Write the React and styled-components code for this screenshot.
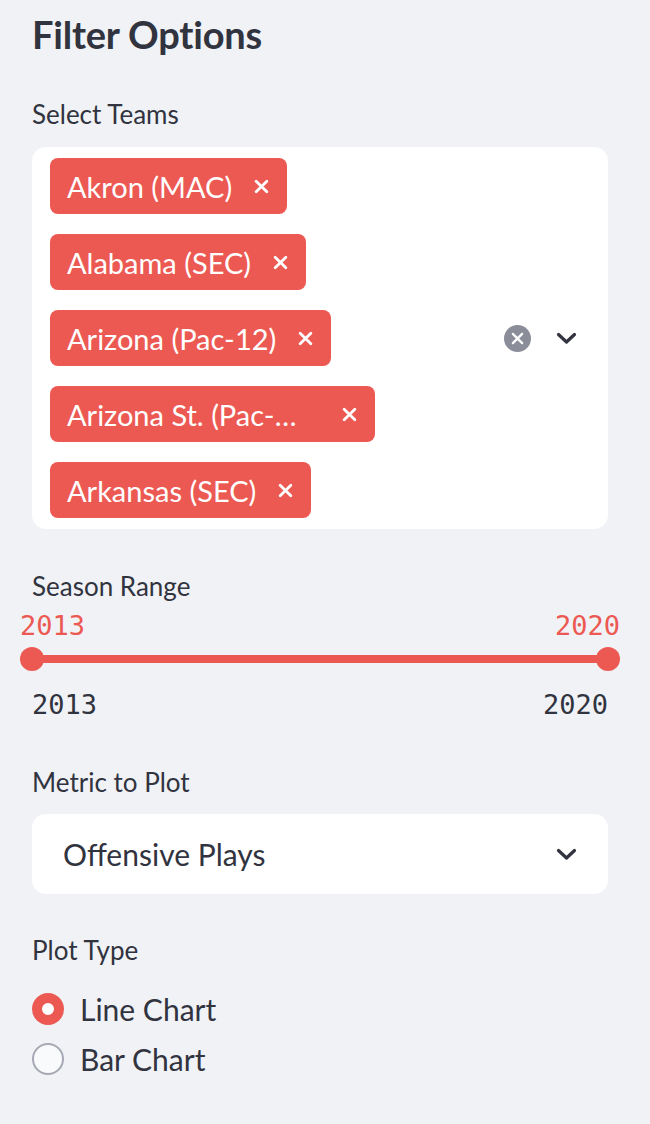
import React from "react";
import styled, { createGlobalStyle } from "styled-components";

const GlobalStyle = createGlobalStyle`
  html, body {
    margin: 0;
    padding: 0;
    background: #f0f2f6;
  }
  body {
    font-family: Lato, "Noto Sans", sans-serif;
    color: #31333f;
  }
`;

const RED = "#ec5953";
const TEXT = "#31333f";

const Sidebar = styled.div`
  width: 650px;
  min-height: 1124px;
  box-sizing: border-box;
  padding: 10px 42px 0 32px;
  background: #f0f2f6;
  display: flex;
  flex-direction: column;
`;

const Heading = styled.h3`
  margin: 0;
  font-size: 38px;
  line-height: 48px;
  font-weight: 700;
  color: ${TEXT};
  letter-spacing: -0.2px;
`;

const Label = styled.div`
  font-size: 26px;
  line-height: 32px;
  color: ${TEXT};
  margin-top: ${(p) => p.$mt}px;
`;

const MultiBox = styled.div`
  margin-top: 17px;
  background: #ffffff;
  border-radius: 14px;
  padding: 11px 0 11px 18px;
  display: flex;
  align-items: center;
`;

const TagList = styled.div`
  flex: 1;
  display: flex;
  flex-direction: column;
  align-items: flex-start;
  gap: 20px;
`;

const Tag = styled.div`
  height: 56px;
  box-sizing: border-box;
  background: ${RED};
  border-radius: 8px;
  padding: 0 18px 0 17px;
  display: flex;
  align-items: center;
  gap: 22px;
  color: #ffffff;
  font-size: 29px;
`;

const TagText = styled.span`
  white-space: nowrap;
  overflow: hidden;
  text-overflow: ellipsis;
  max-width: 253px;
  ${(p) =>
    p.$truncate
      ? "width: 253px; box-sizing: border-box; padding-right: 16px;"
      : ""}
`;

const Indicators = styled.div`
  display: flex;
  align-items: center;
  gap: 25px;
  padding-right: 31px;
`;

const ClearCircle = styled.div`
  width: 27px;
  height: 27px;
  border-radius: 50%;
  background: #8b8d99;
  display: flex;
  align-items: center;
  justify-content: center;
`;

const SliderBlock = styled.div`
  margin-top: 9px;
  display: flex;
  flex-direction: column;
`;

const ValueRow = styled.div`
  display: flex;
  justify-content: space-between;
  margin: 0 -12px;
  font-family: "DejaVu Sans Mono", "Liberation Mono", monospace;
  font-size: 27px;
  line-height: 30px;
  color: ${(p) => p.$color};
`;

const Rail = styled.div`
  position: relative;
  margin-top: 6px;
  height: 24px;
  display: flex;
  align-items: center;
`;

const Track = styled.div`
  flex: 1;
  height: 8px;
  background: ${RED};
`;

const Thumb = styled.div`
  position: absolute;
  top: 0;
  width: 24px;
  height: 24px;
  border-radius: 50%;
  background: ${RED};
  ${(p) => (p.$side === "left" ? "left: -12px;" : "right: -12px;")}
`;

const TickRow = styled(ValueRow)`
  margin: 19px 0 0 0;
`;

const SelectBox = styled.div`
  margin-top: 16px;
  height: 80px;
  box-sizing: border-box;
  background: #ffffff;
  border-radius: 14px;
  padding: 0 31px 0 31px;
  display: flex;
  align-items: center;
  justify-content: space-between;
`;

const SelectValue = styled.span`
  font-size: 30px;
  line-height: 36px;
  color: ${TEXT};
`;

const RadioGroup = styled.div`
  margin-top: 23px;
  display: flex;
  flex-direction: column;
  gap: 10px;
`;

const RadioRow = styled.label`
  height: 40px;
  display: flex;
  align-items: center;
  gap: 16px;
  font-size: 30px;
  line-height: 40px;
  color: ${TEXT};
`;

const RadioCircle = styled.span`
  width: 32px;
  height: 32px;
  box-sizing: border-box;
  border-radius: 50%;
  flex-shrink: 0;
  ${(p) =>
    p.$checked
      ? `border: 10px solid ${RED}; background: #ffffff;`
      : `border: 2px solid #a6a9b3; background: #f9fafc;`}
`;

const XIcon = ({ size = 15, color = "#fff", width = 2.6 }) => (
  <svg width={size} height={size} viewBox="0 0 14 14">
    <path
      d="M2 2 L12 12 M12 2 L2 12"
      stroke={color}
      strokeWidth={width}
      strokeLinecap="round"
    />
  </svg>
);

const Chevron = () => (
  <svg width="21" height="13" viewBox="0 0 21 13">
    <path
      d="M2.5 2.5 L10.5 10 L18.5 2.5"
      fill="none"
      stroke={TEXT}
      strokeWidth="3.2"
      strokeLinecap="round"
      strokeLinejoin="round"
    />
  </svg>
);

const teams = [
  { name: "Akron (MAC)" },
  { name: "Alabama (SEC)" },
  { name: "Arizona (Pac-12)" },
  { name: "Arizona St. (Pac-12)", truncate: true },
  { name: "Arkansas (SEC)" },
];

export default function App() {
  return (
    <>
      <GlobalStyle />
      <Sidebar>
        <Heading>Filter Options</Heading>

        <Label $mt={40}>Select Teams</Label>
        <MultiBox>
          <TagList>
            {teams.map((t) => (
              <Tag key={t.name}>
                <TagText $truncate={t.truncate}>{t.name}</TagText>
                <XIcon />
              </Tag>
            ))}
          </TagList>
          <Indicators>
            <ClearCircle>
              <XIcon size={13} width={2.4} />
            </ClearCircle>
            <Chevron />
          </Indicators>
        </MultiBox>

        <Label $mt={41}>Season Range</Label>
        <SliderBlock>
          <ValueRow $color={RED}>
            <span>2013</span>
            <span>2020</span>
          </ValueRow>
          <Rail>
            <Track />
            <Thumb $side="left" />
            <Thumb $side="right" />
          </Rail>
          <TickRow $color={TEXT}>
            <span>2013</span>
            <span>2020</span>
          </TickRow>
        </SliderBlock>

        <Label $mt={46}>Metric to Plot</Label>
        <SelectBox>
          <SelectValue>Offensive Plays</SelectValue>
          <Chevron />
        </SelectBox>

        <Label $mt={40}>Plot Type</Label>
        <RadioGroup>
          <RadioRow>
            <RadioCircle $checked />
            Line Chart
          </RadioRow>
          <RadioRow>
            <RadioCircle />
            Bar Chart
          </RadioRow>
        </RadioGroup>
      </Sidebar>
    </>
  );
}
